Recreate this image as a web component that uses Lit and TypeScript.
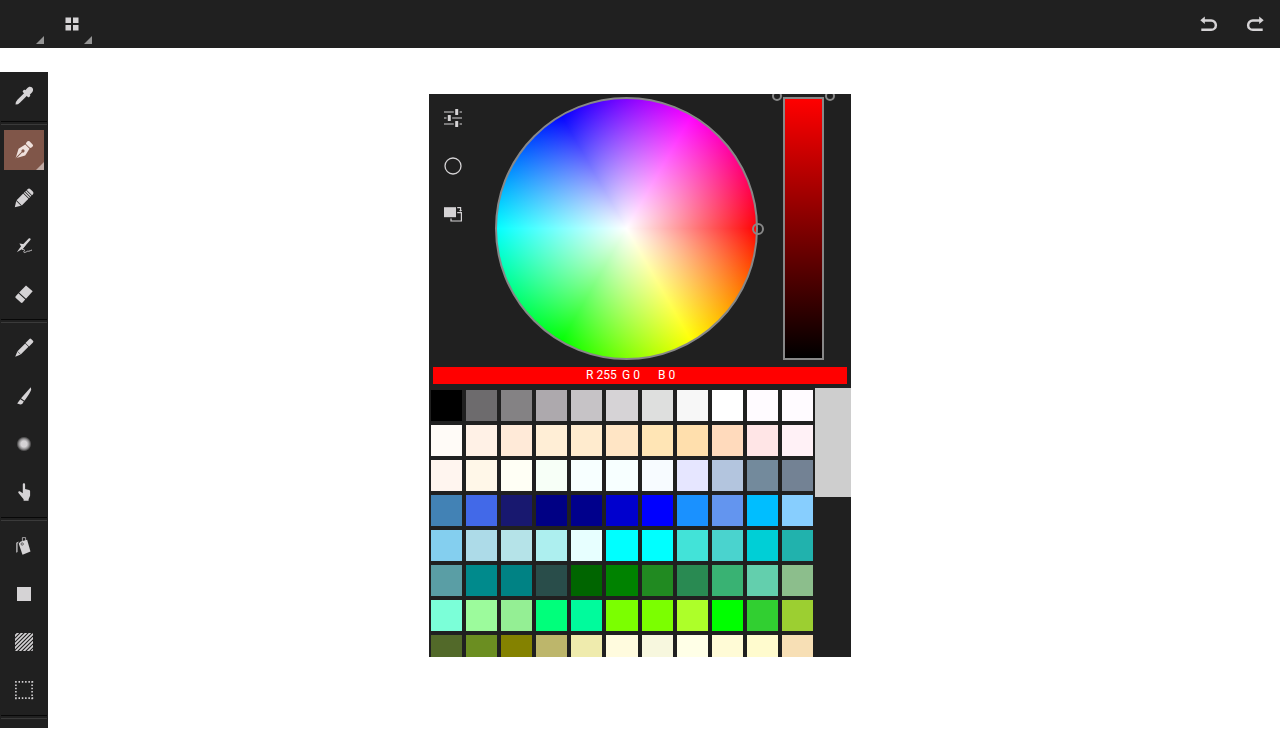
import { LitElement, html, css, svg, nothing } from "lit";
import type { SVGTemplateResult } from "lit";
import { customElement, property, state } from "lit/decorators.js";
import { classMap } from "lit/directives/class-map.js";
import { styleMap } from "lit/directives/style-map.js";

/* Every icon is drawn on a 48 x 48 canvas, the size of its button. */
const icons: Record<string, SVGTemplateResult> = {
  blank: svg``,
  grid: svg`<path d="M65.500 17.500h5.500v5.500h-5.500zM73 17.500h5.500v5.500H73zM65.500 25h5.500v5.500h-5.500zM73 25h5.500v5.500H73z" transform="translate(-48 0)"/>`,
  undo: svg`<path class="line" stroke-width="2.5" d="M19 20.500h8.200a4.600 4.600 0 0 1 0 9.300h-9.900"/><path d="M16.300 20.300l4.500-3.700v7.400z"/>`,
  redo: svg`<path class="line" stroke-width="2.5" d="M29 20.500h-8.200a4.600 4.600 0 0 0 0 9.300h9.900"/><path d="M31.700 20.300l-4.500-3.700v7.400z"/>`,
  dropper: svg`<g transform="rotate(-45 24 24)"><path d="M12 24l2-1.500 3-.4h10v3.800H17l-3-.4z"/><rect x="26" y="19.600" width="3" height="8.800" rx="1"/><path d="M28 20.800h3.400c5.600-.6 5.600 7 0 6.400H28z"/></g>`,
  pen: svg`<g transform="rotate(-45 24 24)"><path d="M12.200 24l8.800-4.700 7.800 1.700v6l-7.800 1.700z"/><rect x="29.600" y="20.400" width="4.400" height="7.200" rx="1.400"/><path class="cut" stroke-width="1" d="M13 24h8.500"/><circle class="hole" cx="22.600" cy="24" r="1.600"/></g>`,
  pencil: svg`<g transform="rotate(-45 24 24)"><path d="M11 24l5.400-3.400v6.800z"/><path d="M17.200 20.300h9.400v7.400h-9.400zM27.400 20.300h1.300v7.400h-1.300zM29.500 20.300h1.300v7.400h-1.300z"/><path d="M31.600 20.300h1.200a2 2 0 0 1 2 2v3.400a2 2 0 0 1-2 2h-1.200z"/></g>`,
  scribble: svg`<path d="M16.800 30.200l3.700-5.200 8.200-8.500c1.200-1 2.600.3 1.600 1.500l-7.600 8.800z"/><path d="M19.400 21.600l6.600.8-3.400 4.600z"/><path class="line" stroke-width=".9" d="M22 27.400c2.400-.2 3 .6 2 1.800-.8 1.400.6 1.700 2.400.6s1.600-.4 2.600-.6 2-1 3-1.200"/>`,
  eraser: svg`<path d="M26 15.500l6.700 5.800-6.700 7.500-6.900-6.300zM18.400 23.300l6.800 6.200-2.600 3c-.6.600-1.200.6-1.800 0l-5-4.500c-.6-.6-.6-1.200-.1-1.800z"/>`,
  marker: svg`<g transform="rotate(-45 24 24)"><path d="M11.600 24l5.400-2.300h11v4.600H17z"/><path d="M28.600 21.500h5.600a1.200 1.200 0 0 1 1.200 1.200v2.600a1.200 1.200 0 0 1-1.200 1.200h-5.600z"/><path class="cut" stroke-width=".5" d="M17 21.400v5.200"/></g>`,
  brush: svg`<path d="M30.800 15.300l-9.800 11 3.400 2.400c2.600-3.400 6-8.300 6.800-11.300zM20.300 27.300l3.500 2.300-1.600 2.500c-1.600.6-3.400.3-5-.5z"/>`,
  blur: svg`<defs><radialGradient id="soft"><stop offset=".4" stop-color="#d5d3d5"/><stop offset=".7" stop-color="#d5d3d5" stop-opacity=".6"/><stop offset="1" stop-color="#d5d3d5" stop-opacity="0"/></radialGradient></defs><circle cx="24" cy="24" r="7.500" fill="url(#soft)"/>`,
  finger: svg`<path d="M22.800 16.500c0-1.700 2.300-1.700 2.300 0v4.600l4 .8c.7.200 1 .6 1 1.300v4.600l-1.500 3.400v1.600h-5v-1.500l-5.100-6.300c-.9-1.300.5-2.300 1.700-1.400l2.600 1.700z"/>`,
  bucket: svg`<path class="line" stroke-width=".7" d="M22.400 19v-3.400h3.200v3.200"/><path d="M18.700 21.400l2-1.800 6.400-1.800 3.400 11.700-8 3.200z"/><path d="M16.300 20.800l2.700-1.300-1.500 2v8.400l-1.200.8z"/><circle class="cut" stroke-width=".6" cx="22.200" cy="22" r="1.200"/>`,
  square: svg`<path d="M17 17h14v14H17z"/>`,
  hatch: svg`<defs><clipPath id="box"><rect x="15" y="15" width="18" height="18" rx="1"/></clipPath></defs><path class="line" clip-path="url(#box)" stroke-width="1.700" d="M14 19l5-5M14 23l9-9M14 27l13-13M14 31l17-17M14 35l21-21M18 35l17-17M22 35l13-13M26 35l9-9M30 35l5-5"/>`,
  select: svg`<path class="line" stroke-width="1.600" stroke-dasharray="1.500 1.800" d="M15.200 15.900h18M15.200 32.100h18M15.900 15.200v18M32.100 15.200v18"/>`,
  sliders: svg`<path class="line" stroke-width="1.200" d="M15 18h9.800M30.600 18H33M15 24h2.500M23.200 24H33M15 30h9.800M30.600 30H33"/><rect x="26.200" y="15" width="3" height="6" rx=".5"/><rect x="18.800" y="21" width="3" height="6" rx=".5"/><rect x="26.200" y="27" width="3" height="6" rx=".5"/>`,
  circle: svg`<circle class="line" stroke-width="1.300" cx="24" cy="24" r="8"/>`,
  swap: svg`<path d="M15 17.200h12v10H15z"/><path class="line" stroke-width="1.200" d="M28.200 22.600h4.200v8.400H22v-2.600M28.200 17.700h3.400v2.400"/><path d="M30 20h3.200l-1.600 1.800z"/>`,
};

/** A square tool button, with an optional corner mark for its sub-menu. */
@customElement("tool-button")
export class ToolButton extends LitElement {
  @property() icon = "blank";
  @property() label = "";
  @property({ type: Boolean }) menu = false;
  @property({ type: Boolean }) active = false;

  static styles = css`
    :host {
      display: block;
      flex: none;
    }
    .button {
      display: block;
      position: relative;
      width: 48px;
      height: 48px;
      padding: 4px;
      border: 0;
      background: transparent;
      cursor: pointer;
    }
    .face {
      display: grid;
      place-items: center;
      height: 100%;
    }
    .active .face {
      background: #805649;
    }
    .icon {
      width: 48px;
      height: 48px;
      margin: -4px;
      fill: #d5d3d5;
      stroke: none;
    }
    .active .icon {
      fill: #eee0dc;
    }
    .line {
      fill: none;
      stroke: #d5d3d5;
    }
    .cut {
      fill: none;
      stroke: #202020;
    }
    .active .cut {
      stroke: #805649;
    }
    .hole {
      fill: #805649;
    }
    .corner {
      position: absolute;
      right: 4px;
      bottom: 4px;
      width: 8px;
      height: 8px;
      background: #949494;
      clip-path: polygon(100% 0, 100% 100%, 0 100%);
    }
    .active .corner {
      background: #bfaaa4;
    }
  `;

  render() {
    return html`<button
      class=${classMap({ button: true, active: this.active })}
      type="button"
      aria-label=${this.label}
    >
      <span class="face">
        <svg class="icon" viewBox="0 0 48 48" aria-hidden="true">${icons[this.icon]}</svg>
      </span>
      ${this.menu ? html`<span class="corner"></span>` : nothing}
    </button>`;
  }
}

const palette: string[] = [
  "#000000 #6d6b6d #848284 #ada9ad #c6c3c6 #d6d3d6 #dedfde #f7f7f7 #ffffff #fffbff #fffbff",
  "#fffbf7 #fff1e6 #ffead8 #ffeed6 #ffebce #ffe5c5 #ffe5b5 #ffdfad #ffdabc #ffe5e6 #fff1f6",
  "#fff5ef #fff7e8 #fffff5 #f7fff7 #f7ffff #f7ffff #f7fbff #e6e6ff #b3c5de #738a9c #738294",
  "#4282b5 #4269e8 #18186f #000084 #00008c #0000ce #0000ff #1a91ff #6395ef #00beff #87cefe",
  "#84cfef #addbe8 #b5e3e8 #adefef #e7ffff #00ffff #00ffff #42e3d8 #4ad3ce #00cfd6 #21b2ad",
  "#5a9ea5 #008a8c #008284 #294d4a #006500 #008200 #218a21 #298a52 #39b273 #63cfad #8cbe8c",
  "#7bffd8 #9cfb9c #94ef94 #00ff7b #00fb9c #7bff00 #7bff00 #adff29 #00ff00 #31cf31 #9ccf31",
  "#526929 #6b8e21 #848200 #bdb66b #efebad #fffbde #f7f7de #ffffe7 #fffbd6 #fffbce #f7dfb5",
].flatMap((row) => row.split(" "));

/** The colour picker: wheel, value slider, readout and palette. */
@customElement("color-picker")
export class ColorPicker extends LitElement {
  @state() private rgb = [255, 0, 0];

  static styles = css`
    :host {
      display: flex;
      flex-direction: column;
      width: min(422px, 100%);
      height: min(563px, 100%);
      overflow: hidden;
      background: #202020;
    }
    .mixer {
      display: flex;
      flex: none;
      padding-right: 27px;
    }
    .modes {
      margin-right: 18px;
    }
    .wheel {
      position: relative;
      box-sizing: border-box;
      flex: 1 1 0;
      align-self: flex-start;
      min-width: 0;
      aspect-ratio: 1;
      margin: 3px 25px 7px 0;
      border: 2px solid #888;
      border-radius: 50%;
      background:
        radial-gradient(closest-side, #fff, rgba(255, 255, 255, 0)) border-box,
        conic-gradient(from 90deg, #f00, #ff0, #0f0, #0ff, #00f, #f0f, #f00) border-box;
    }
    .ring {
      position: absolute;
      box-sizing: border-box;
      width: 10px;
      height: 10px;
      border: 2px solid #888;
      border-radius: 50%;
      pointer-events: none;
    }
    .hue {
      top: calc(50% - 6px);
      right: -8px;
      width: 12px;
      height: 12px;
    }
    .value {
      display: flex;
      position: relative;
      flex: none;
      width: 41px;
      margin: 3px 0 7px;
    }
    .before {
      top: -6px;
      left: -11px;
    }
    .after {
      top: -6px;
      right: -11px;
    }
    .slider {
      appearance: none;
      box-sizing: border-box;
      writing-mode: vertical-lr;
      direction: rtl;
      width: 41px;
      margin: 0;
      border: 2px solid #888;
      background: linear-gradient(#f00, #000);
    }
    .slider::-webkit-slider-thumb {
      appearance: none;
      width: 37px;
      height: 2px;
      background: transparent;
    }
    .readout {
      display: flex;
      flex: none;
      justify-content: center;
      margin: 0 4px 4px;
      color: #fff;
      font: 12px/17px Roboto, sans-serif;
    }
    .channel {
      width: 36px;
      white-space: nowrap;
    }
    .library {
      display: flex;
      flex: 1;
      min-height: 0;
    }
    .swatches {
      display: grid;
      flex: 1;
      grid-template-columns: repeat(11, 1fr);
      grid-auto-rows: 35px;
      align-content: start;
      overflow: hidden;
    }
    .swatch {
      padding: 2px;
      border: 0;
      background-clip: content-box;
      cursor: pointer;
    }
    .scrollbar {
      width: 36px;
    }
    .thumb {
      height: 40.4%;
      background: #cecece;
    }
  `;

  private pick(color: string) {
    this.rgb = [1, 3, 5].map((i) => parseInt(color.slice(i, i + 2), 16));
  }

  render() {
    return html`
      <div class="mixer">
        <div class="modes">
          <tool-button icon="sliders" label="Colour sliders"></tool-button>
          <tool-button icon="circle" label="Colour wheel"></tool-button>
          <tool-button icon="swap" label="Swap colours"></tool-button>
        </div>
        <div class="wheel"><span class="ring hue"></span></div>
        <div class="value">
          <input class="slider" type="range" min="0" max="100" value="100" aria-label="Value" />
          <span class="ring before"></span>
          <span class="ring after"></span>
        </div>
      </div>
      <div class="readout" style=${styleMap({ background: `rgb(${this.rgb.join(",")})` })}>
        ${["R", "G", "B"].map((name, i) => html`<span class="channel">${name} ${this.rgb[i]}</span>`)}
      </div>
      <div class="library">
        <div class="swatches">
          ${palette.map(
            (color) => html`<button
              class="swatch"
              type="button"
              aria-label=${color}
              style=${styleMap({ backgroundColor: color })}
              @click=${() => this.pick(color)}
            ></button>`,
          )}
        </div>
        <div class="scrollbar"><div class="thumb"></div></div>
      </div>
    `;
  }
}

type Tool = { icon: string; label: string; menu?: boolean };

const toolGroups: Tool[][] = [
  [{ icon: "dropper", label: "Eyedropper" }],
  [
    { icon: "pen", label: "Pen", menu: true },
    { icon: "pencil", label: "Pencil" },
    { icon: "scribble", label: "Airbrush" },
    { icon: "eraser", label: "Eraser" },
  ],
  [
    { icon: "marker", label: "Marker" },
    { icon: "brush", label: "Brush" },
    { icon: "blur", label: "Blur" },
    { icon: "finger", label: "Smudge" },
  ],
  [
    { icon: "bucket", label: "Fill" },
    { icon: "square", label: "Shape" },
    { icon: "hatch", label: "Pattern" },
    { icon: "select", label: "Selection" },
  ],
];

@customElement("app-root")
export class AppRoot extends LitElement {
  @state() private tool = "pen";

  static styles = css`
    :host {
      display: flex;
      position: relative;
      flex-direction: column;
      gap: 24px;
      box-sizing: border-box;
      height: 100vh;
      padding-bottom: 24px;
      overflow: hidden;
      background: #fff;
    }
    .topbar {
      display: flex;
      flex: none;
      background: #202020;
    }
    .spacer {
      flex: 1;
    }
    .toolbar {
      flex: 1;
      width: 48px;
      min-height: 0;
      overflow: hidden;
      background: #202020;
    }
    .rule {
      box-sizing: border-box;
      height: 4px;
      margin: 1px;
      border: solid;
      border-width: 1px 0;
      border-color: #080808 transparent #3a3a3a;
    }
    .overlay {
      display: grid;
      position: absolute;
      inset: 0;
      place-items: center;
      padding-bottom: 1px;
      pointer-events: none;
    }
    .picker {
      pointer-events: auto;
    }
  `;

  render() {
    return html`
      <header class="topbar">
        <tool-button icon="blank" label="Brush preset" menu></tool-button>
        <tool-button icon="grid" label="Menu" menu></tool-button>
        <span class="spacer"></span>
        <tool-button icon="undo" label="Undo"></tool-button>
        <tool-button icon="redo" label="Redo"></tool-button>
      </header>
      <nav class="toolbar" aria-label="Tools">
        ${toolGroups.map(
          (group) => html`
            ${group.map(
              (t) => html`<tool-button
                icon=${t.icon}
                label=${t.label}
                ?menu=${t.menu}
                ?active=${t.icon === this.tool}
                @click=${() => (this.tool = t.icon)}
              ></tool-button>`,
            )}
            <div class="rule"></div>
          `,
        )}
      </nav>
      <div class="overlay"><color-picker class="picker"></color-picker></div>
    `;
  }
}
